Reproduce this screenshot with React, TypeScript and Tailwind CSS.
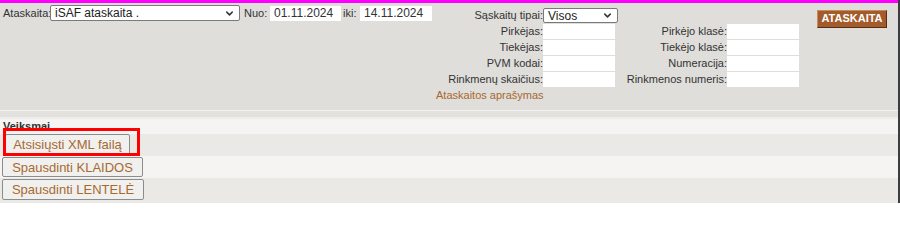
import { ChevronDown } from "lucide-react";

// iSAF report filter panel with actions list

const font = "font-['Liberation_Sans',Arial,sans-serif]";

function Select({ value, className }: { value: string; className: string }) {
  return (
    <div
      className={`flex items-center justify-between bg-white border border-[#7a7a7a] rounded-[2px] pl-[4px] pr-[4px] text-[12px] text-[#222] leading-none ${className}`}
    >
      <span>{value}</span>
      <ChevronDown size={11} strokeWidth={3.2} className="text-[#333]" />
    </div>
  );
}

function Field({ value = "", className }: { value?: string; className: string }) {
  return (
    <div className={`bg-white text-[12px] text-[#333] leading-[15px] pl-[4px] ${className}`}>
      {value}
    </div>
  );
}

const filters = [
  ["Pirkėjas:", "Pirkėjo klasė:"],
  ["Tiekėjas:", "Tiekėjo klasė:"],
  ["PVM kodai:", "Numeracija:"],
  ["Rinkmenų skaičius:", "Rinkmenos numeris:"],
];

const actions = [
  { label: "Atsisiųsti XML failą", w: "w-[125px] ml-[5px] h-[21px]", row: "bg-[#eae9e5] h-[22px] items-start" },
  { label: "Spausdinti KLAIDOS", w: "w-[141px] ml-[2px] h-[20px]", row: "bg-[#f5f4f2] h-[22px] items-center" },
  { label: "Spausdinti LENTELĖ", w: "w-[142px] ml-[2px] h-[21px]", row: "bg-[#eae9e5] h-[25px] items-start pt-[1px]" },
];

export default function App() {
  return (
    <div className={`relative w-[900px] h-[203px] overflow-hidden bg-[#eae9e5] border-r-2 border-r-[#3d3d3d] ${font}`}>
      <div className="h-[3px] bg-[#ff00ff]" />

      {/* Header filters */}
      <div className="flex h-[107px] bg-[#dfdedb]">
        <div className="w-[436px] pl-[3px] pt-[1px]">
          <div className="flex items-center h-[18px] text-[11px] text-[#333]">
            <span className="w-[47px]">Ataskaita:</span>
            <Select value="iSAF ataskaita ." className="w-[190px] h-[16px]" />
            <span className="ml-[4px] w-[26px]">Nuo:</span>
            <Field value="01.11.2024" className="w-[71px] h-[15px]" />
            <span className="ml-[2px] w-[17px]">iki:</span>
            <Field value="14.11.2024" className="w-[72px] h-[15px]" />
          </div>
        </div>

        <div className="grid grid-cols-[107px_72px_112px_72px] auto-rows-[15px] gap-y-[1px] pt-[5px] text-[11px] text-[#333] leading-[15px]">
          <span className="text-right whitespace-nowrap">Sąskaitų tipai:</span>
          <div className="col-span-3">
            <Select value="Visos" className="w-[75px] h-[15px]" />
          </div>
          {filters.map(([a, b]) => (
            <div key={a} className="contents">
              <span className="text-right whitespace-nowrap">{a}</span>
              <Field className="h-[15px]" />
              <span className="text-right whitespace-nowrap">{b}</span>
              <Field className="h-[15px]" />
            </div>
          ))}
          <span className="col-span-2 whitespace-nowrap text-[#a8692f]">Ataskaitos aprašymas</span>
        </div>

        <div className="ml-[18px] mt-[2px]">
          <button className="w-[70px] h-[18px] bg-[#a35b2b] border border-[#c98a5c] border-r-[#5a2c10] border-b-[#5a2c10] text-white text-[11px] font-bold leading-none">
            ATASKAITA
          </button>
        </div>
      </div>

      {/* Separator */}
      <div className="h-[1px] bg-[#f2f1ef]" />
      <div className="h-[6px] bg-[#e2e1de]" />
      <div className="h-[2px] bg-[#eeedeb]" />

      {/* Actions */}
      <div className="h-[15px] bg-[#f5f4f2] pl-[3px] text-[11px] font-bold text-[#333] leading-[15px]">
        Veiksmai
      </div>
      {actions.map((a) => (
        <div key={a.label} className={`flex ${a.row}`}>
          <button
            className={`${a.w} bg-[#f0f0ef] border border-[#8c8c8c] rounded-[2px] text-[13px] text-[#a8692f] leading-none`}
          >
            {a.label}
          </button>
        </div>
      ))}

      {/* Highlight annotation */}
      <div className="absolute left-[3px] top-[128px] w-[137px] h-[28px] border-[3px] border-[#ff0000] pointer-events-none" />
    </div>
  );
}
